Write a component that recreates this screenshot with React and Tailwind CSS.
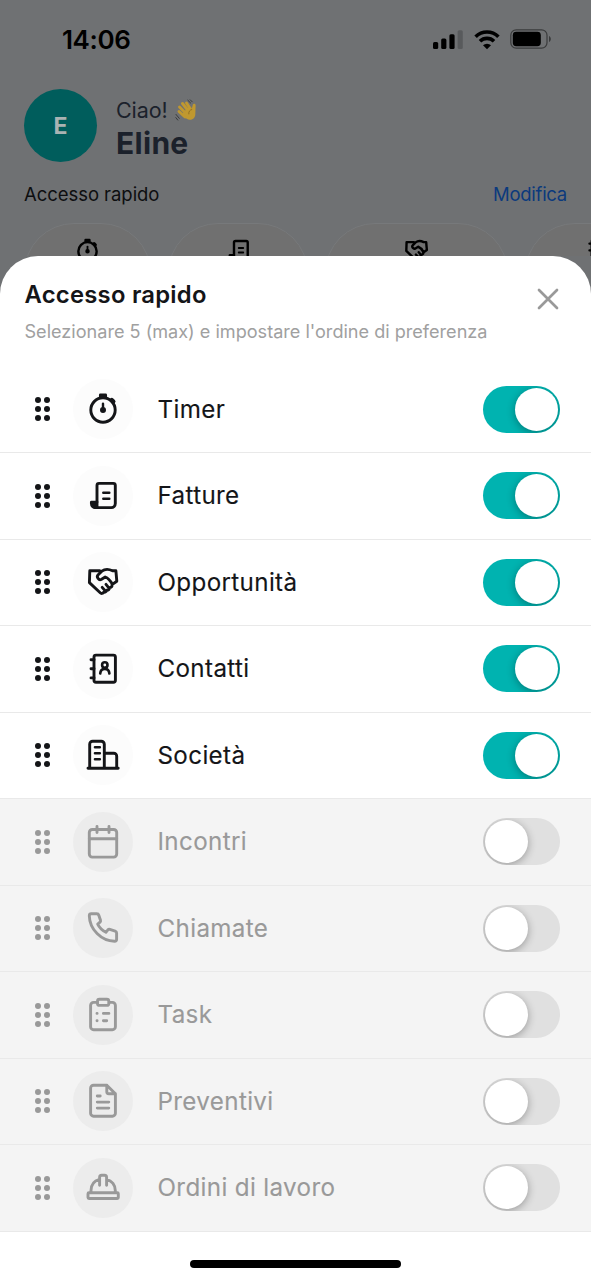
function Svg({ children, size = 36, width = 2.9 }) {
  return (
    <svg
      width={size}
      height={size}
      viewBox="0 0 36 36"
      fill="none"
      stroke="currentColor"
      strokeWidth={width}
      strokeLinecap="round"
      strokeLinejoin="round"
      className="shrink-0"
    >
      {children}
    </svg>
  )
}

const icons = {
  timer: (
    <>
      <circle cx="18" cy="19" r="12.2" />
      <path d="M15.4 4h5.2v2.4h-5.2z" fill="currentColor" />
      <path d="m26.8 8.9 1.6 1.6" strokeWidth="4.2" />
      <path d="M18 12.8v6" strokeWidth="2.4" />
      <circle cx="18" cy="19" r="1.7" fill="currentColor" strokeWidth="2.6" />
    </>
  ),
  receipt: (
    <>
      <path d="M12 24V7.4a2 2 0 0 1 2-2h14.3a2 2 0 0 1 2 2v18.2a4 4 0 0 1-4 4H10" />
      <path d="M6.4 24.2H12v5.4h-1.6a4 4 0 0 1-4-4z" fill="currentColor" />
      <path d="M18.3 14.7h6M18.3 20.7h6" strokeWidth="2.5" />
    </>
  ),
  handshake: (
    <>
      <path d="M14.6 6.8H4.8L4.4 18.6l10.8 10.2c1 1 2.8.8 3.4-.6 1.5.4 2.9-.5 3-2 1.7.2 3-1 2.8-2.6 1.8 0 3.2-1.4 2.6-3l4.8-3.4-.9-10.4h-3.4c-3.6-1.8-7.8-1.8-10.7.4l-3.6 3.6c-2.2 2.2.6 6 3.4 4.4l3.6-2.2c2.8 1 5 3.4 6.9 6.8" />
      <path d="m17.2 23.4 2.6 3M21 20.4l2.8 3.4" />
    </>
  ),
  contacts: (
    <>
      <rect x="9" y="4.1" width="21.4" height="27.2" rx="2" />
      <path d="M6 8.8h3M6 17.8h3M6 26.9h3" />
      <circle cx="19.8" cy="14" r="2.7" strokeWidth="2.6" />
      <path d="M15.2 22.5c.3-2.9 2-4.6 4.6-4.6s4.3 1.7 4.6 4.6" strokeWidth="2.6" />
    </>
  ),
  company: (
    <>
      <path d="M3 31.2h30.2M4.7 31V7.2a3 3 0 0 1 3-3h8.6a3 3 0 0 1 3 3V31M19.3 16.2h9.4a3 3 0 0 1 3 3V31" />
      <path d="M10 10.3h4.8M10 16.3h4.8M10 22.3h4.8" strokeWidth="2.6" />
    </>
  ),
  calendar: (
    <>
      <rect x="4.3" y="5.5" width="27.4" height="27.6" rx="3" />
      <path d="M4.3 14.8h27.4M12 2.5v6M24 2.5v6" />
    </>
  ),
  phone: (
    <path d="M6.3 3.8h5.5c1 0 1.7.5 2 1.4l1.7 5.1c.2.7 0 1.4-.5 1.9l-2.3 2c1.7 3.5 4.7 6.4 8.2 8.1l2-2.4c.5-.5 1.2-.7 1.9-.5l5.4 1.8c.9.3 1.4 1 1.4 1.9v6.1c0 1.1-.9 2-2 2C16.3 31.2 4.6 19.4 4.3 5.8c0-1.1.9-2 2-2z" />
  ),
  task: (
    <>
      <path d="M11.5 5.4H8.6a3 3 0 0 0-3 3v21.3a3 3 0 0 0 3 3h18.8a3 3 0 0 0 3-3V8.4a3 3 0 0 0-3-3h-2.9" />
      <rect x="12.5" y="2.3" width="11.3" height="6.1" rx="2" />
      <path d="M12 16.4h.1M18.4 16.4h5.5M12 23.8h.1M18.4 23.8h3.3" />
    </>
  ),
  quote: (
    <>
      <path d="M21.8 2.2H8.6a3 3 0 0 0-3 3v25a3 3 0 0 0 3 3h18.8a3 3 0 0 0 3-3V10.8zM21.8 2.2v6.6a2 2 0 0 0 2 2h6.6" />
      <path d="M12.3 13h2.9M12.3 19.1h11.5M12.3 25.1h11.5" />
    </>
  ),
  helmet: (
    <>
      <rect x="3" y="22.8" width="30.3" height="5.7" rx="1" />
      <path d="M6 22.5v-2c0-5.3 3-9.7 8.5-11.2M21.5 9.3c5.5 1.5 8.8 5.9 8.8 11.2v2M14.6 15.3V7.4c0-1.2.8-2.1 2-2.1h3c1.2 0 2 .9 2 2.1v7.9" />
    </>
  ),
}

const items = [
  { label: 'Timer', icon: 'timer', on: true },
  { label: 'Fatture', icon: 'receipt', on: true },
  { label: 'Opportunità', icon: 'handshake', on: true },
  { label: 'Contatti', icon: 'contacts', on: true },
  { label: 'Società', icon: 'company', on: true },
  { label: 'Incontri', icon: 'calendar', on: false },
  { label: 'Chiamate', icon: 'phone', on: false },
  { label: 'Task', icon: 'task', on: false },
  { label: 'Preventivi', icon: 'quote', on: false },
  { label: 'Ordini di lavoro', icon: 'helmet', on: false },
]

function StatusBar() {
  return (
    <div className="flex h-20 items-center justify-between pr-[39px] pl-[62px] text-black">
      <span className="text-[26px] leading-8 font-semibold tracking-[-0.4px]">14:06</span>
      <div className="flex items-center">
        <svg width="30" height="20" viewBox="0 0 30 20" fill="currentColor">
          <rect x="0" y="12" width="5.2" height="7" rx="1.5" />
          <rect x="8.2" y="8.5" width="5.2" height="10.5" rx="1.5" />
          <rect x="16.4" y="4.2" width="5.2" height="14.8" rx="1.5" />
          <rect x="24.6" y="0.2" width="5.2" height="18.8" rx="1.5" opacity="0.2" />
        </svg>
        <svg className="mb-px ml-[11px]" width="26" height="20" viewBox="0 0 26 20" fill="none" stroke="currentColor" strokeWidth="3.6">
          <path d="M1.6 6.7a16.2 16.2 0 0 1 22.8 0" />
          <path d="M6 11.2a10 10 0 0 1 14 0" />
          <path d="m13 19.3-4-4a5.7 5.7 0 0 1 8 0z" fill="currentColor" stroke="none" />
        </svg>
        <svg className="mb-[2px] ml-[10px]" width="42" height="20" viewBox="0 0 42 20">
          <rect x="0.8" y="0.8" width="36.2" height="18.4" rx="5.4" fill="none" stroke="#3a3b3c" strokeWidth="1.2" />
          <rect x="2.8" y="2.8" width="28" height="14.4" rx="3.4" />
          <path d="M39 7c2.4.8 2.4 5.2 0 6z" fill="#3a3b3c" />
        </svg>
      </div>
    </div>
  )
}

function Shortcut({ icon, className }) {
  return (
    <div className={`flex h-28 shrink-0 justify-center rounded-[50px] border border-[#77797b] bg-[#707070] pt-[13px] text-black ${className}`}>
      <Svg size={27} width={3.2}>{icons[icon]}</Svg>
    </div>
  )
}

function Home() {
  return (
    <div className="h-[256px] overflow-hidden">
      <StatusBar />
      <div className="flex items-center gap-[19px] px-6 pt-[9px]">
        <div className="flex size-[73px] items-center justify-center rounded-full bg-[#005d5c] pt-0.5 text-[23px] font-bold text-[#a9b3b3]">
          E
        </div>
        <div className="pt-[7px] text-[#1b212b]">
          <p className="flex items-center gap-[7px] text-[21.5px] leading-7 tracking-[-0.1px]">
            Ciao!
            <Wave />
          </p>
          <p className="text-[30px] leading-[38px] font-bold tracking-[0.3px]">Eline</p>
        </div>
      </div>
      <div className="flex items-center justify-between px-6 pt-[17.5px] text-[18.5px] leading-7">
        <span className="tracking-[-0.05px] text-[#0d0e10]">Accesso rapido</span>
        <span className="tracking-[-0.25px] text-[#0b3a7d]">Modifica</span>
      </div>
      <div className="flex gap-[17px] pt-[15.5px] pl-6">
        <Shortcut icon="timer" className="w-[127px]" />
        <Shortcut icon="receipt" className="w-[140px]" />
        <Shortcut icon="handshake" className="w-[183px]" />
        <Shortcut icon="contacts" className="w-[147px]" />
      </div>
    </div>
  )
}

function Wave() {
  return (
    <svg width="23" height="23" viewBox="0 0 23 23" fill="none" strokeLinecap="round">
      <path d="M4 12.5 10 18M4.5 8l8 8M7.5 4.5l7 9M11.5 4l4 6" stroke="#c0982f" strokeWidth="2.9" />
      <path d="M7 15 13.5 8l3.2 2 1.2-4.4c.7-1.6 2.9-.8 2.7.8l-.3 9c-.3 4.6-5 6.9-8.7 4.4z" fill="#c0982f" />
      <path d="M16.8 10.5c-2.3.6-3.2 2.2-3 4.4" stroke="#80601c" strokeWidth=".7" />
      <path d="M12.8 1.2 15.6 4M15.2.8l2 2M1 15.4l3.3 4M.8 18.6l2 2.5" stroke="#353738" strokeWidth=".9" />
    </svg>
  )
}

function Handle() {
  return (
    <svg width="17" height="26" viewBox="0 0 17 26" fill="currentColor" className="shrink-0">
      <circle cx="4" cy="4" r="3" />
      <circle cx="13" cy="4" r="3" />
      <circle cx="4" cy="13" r="3" />
      <circle cx="13" cy="13" r="3" />
      <circle cx="4" cy="22" r="3" />
      <circle cx="13" cy="22" r="3" />
    </svg>
  )
}

function Toggle({ on }) {
  return (
    <button
      type="button"
      role="switch"
      aria-checked={on}
      className={`ml-auto flex h-[47px] w-[77px] items-center overflow-hidden rounded-full px-0.5 ${
        on ? 'justify-end bg-[#00b3b0]' : 'justify-start bg-[#e0e0e0]'
      }`}
    >
      <span className="size-[43px] rounded-full bg-white shadow-[0_2px_8px_rgba(0,0,0,0.32)]" />
    </button>
  )
}

function Row({ item }) {
  return (
    <div
      className={`flex h-[86.5px] items-center border-b pr-[30.6px] pl-[33.5px] ${
        item.on ? 'border-[#e9e9e9] bg-white text-[#141518]' : 'border-[#e9e9e9] bg-[#f4f4f4] text-[#999]'
      }`}
    >
      <Handle />
      <div
        className={`ml-[22.5px] flex size-[60px] shrink-0 items-center justify-center rounded-full ${
          item.on ? 'bg-[#fcfcfc]' : 'bg-[#ececec]'
        }`}
      >
        <Svg>{icons[item.icon]}</Svg>
      </div>
      <span className="ml-[24.5px] pt-px text-[24.2px] leading-8 tracking-[0.35px] [-webkit-text-stroke:0.12px_currentColor]">
        {item.label}
      </span>
      <Toggle on={item.on} />
    </div>
  )
}

function App() {
  return (
    <div className="flex h-[1280px] w-[591px] flex-col overflow-hidden bg-[#6f7173] font-['Inter','Liberation_Sans',sans-serif]">
      <Home />
      <section className="flex flex-1 flex-col rounded-t-[38px] bg-white">
        <header className="flex h-[110.5px] justify-between pt-[23px] pr-[31px] pl-[24.5px]">
          <div>
            <h1 className="text-[23.8px] leading-8 font-semibold tracking-[0.25px] text-[#141518]">Accesso rapido</h1>
            <p className="mt-[6px] text-[18.1px] leading-7 text-[#a0a0a0]">
              Selezionare 5 (max) e impostare l'ordine di preferenza
            </p>
          </div>
          <button type="button" aria-label="Chiudi" className="mt-2 h-6 text-[#999]">
            <svg width="24" height="24" viewBox="0 0 24 24" stroke="currentColor" strokeWidth="2.7" strokeLinecap="round">
              <path d="m3 3 18 18M21 3 3 21" />
            </svg>
          </button>
        </header>
        {items.map((item) => (
          <Row key={item.label} item={item} />
        ))}
        <div className="mx-auto mt-[28.5px] h-2 w-[211px] rounded-full bg-black" />
      </section>
    </div>
  )
}

export default App
